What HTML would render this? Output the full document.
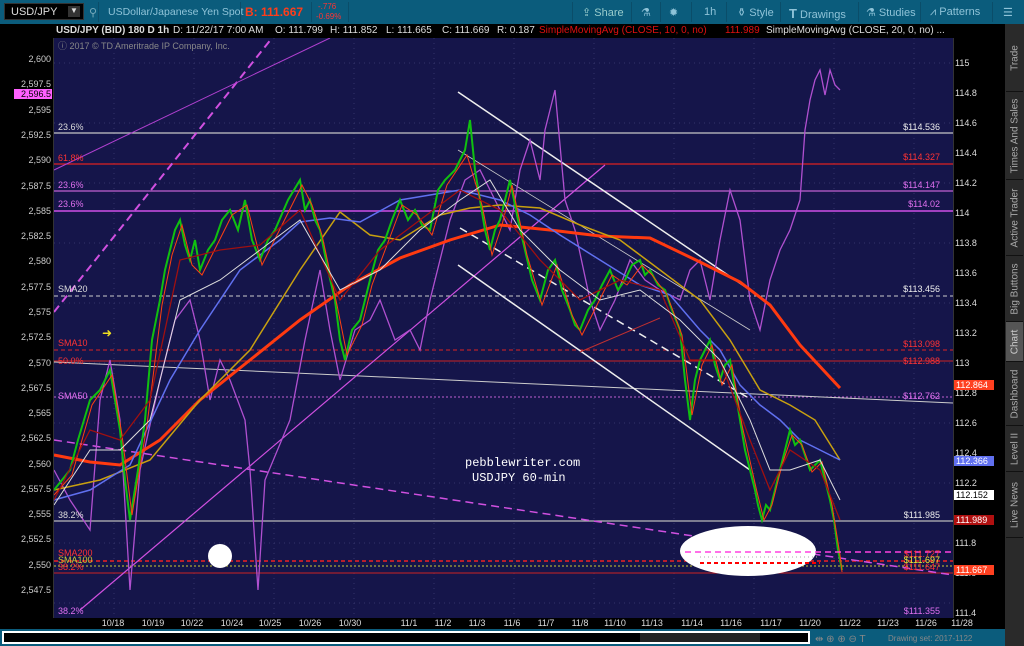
<!DOCTYPE html>
<html><head><meta charset="utf-8"><style>
*{margin:0;padding:0;box-sizing:border-box}
body{width:1024px;height:646px;overflow:hidden;background:#000;font-family:"Liberation Sans",sans-serif;position:relative}
.tb{position:absolute;left:0;top:0;width:1024px;height:24px;background:#0b5c7c;color:#8fc3d8;font-size:11px}
.tb span{position:absolute;top:6px}
.sep{position:absolute;top:2px;width:1px;height:20px;background:#0a4d69}
.info{position:absolute;top:24px;left:54px;width:910px;height:14px;background:#000;color:#ddd;font-size:10px;white-space:nowrap}
.info span{position:absolute;top:1px}
.side{position:absolute;left:1005px;top:24px;width:19px;height:622px;background:#2a2a2a}
.tab{position:absolute;left:1px;width:17px;border-bottom:1px solid #111;color:#aaa;font-size:10px}
.tab div{position:absolute;left:50%;top:50%;transform:translate(-50%,-50%) rotate(-90deg);white-space:nowrap}
</style></head><body>
<div class="tb">
<div style="position:absolute;left:4px;top:3px;width:80px;height:17px;background:#000;border:1px solid #333;color:#ddd;font-size:11px;padding:2px 6px">USD/JPY<span style="position:absolute;right:3px;top:2px;width:12px;height:11px;background:#333;color:#ddd;font-size:8px;text-align:center">▼</span></div>
<span style="left:89px;color:#7ab">⚲</span>
<div class="sep" style="left:98px"></div>
<span style="left:108px;font-size:10.5px">USDollar/Japanese Yen Spot</span>
<div class="sep" style="left:240px"></div>
<span style="left:245px;color:#ff3d1a;font-weight:bold;font-size:12px;top:5px">B: 111.667</span>
<div class="sep" style="left:311px"></div>
<span style="left:318px;top:2px;font-size:8px;color:#f33">-.776</span><span style="left:316px;top:12px;font-size:8px;color:#f33">-0.69%</span>
<div class="sep" style="left:348px"></div>
<div class="sep" style="left:572px"></div>
<span style="left:582px;color:#9cc">⇪ Share</span><div class="sep" style="left:631px"></div>
<span style="left:641px">⚗</span><div class="sep" style="left:660px"></div>
<span style="left:669px">✹</span><div class="sep" style="left:691px"></div>
<span style="left:704px">1h</span><div class="sep" style="left:726px"></div>
<span style="left:737px">⚱ Style</span><div class="sep" style="left:780px"></div>
<span style="left:789px"><b style="font-size:13px">T</b> Drawings</span><div class="sep" style="left:858px"></div>
<span style="left:866px">⚗ Studies</span><div class="sep" style="left:920px"></div>
<span style="left:930px">⩘ Patterns</span><div class="sep" style="left:992px"></div>
<span style="left:1003px">☰</span>
</div>
<div class="info">
<span style="left:2px;font-weight:bold">USD/JPY (BID) 180 D 1h</span>
<span style="left:119px">D: 11/22/17 7:00 AM</span>
<span style="left:221px">O: 111.799</span>
<span style="left:276px">H: 111.852</span>
<span style="left:332px">L: 111.665</span>
<span style="left:388px">C: 111.669</span>
<span style="left:443px">R: 0.187</span>
<span style="left:485px;color:#e01010">SimpleMovingAvg (CLOSE, 10, 0, no)</span>
<span style="left:671px;color:#e01010">111.989</span>
<span style="left:712px">SimpleMovingAvg (CLOSE, 20, 0, no) ...</span>
</div>
<svg style="position:absolute;left:0;top:38px" width="1005" height="608" viewBox="0 38 1005 608" font-family="Liberation Sans" font-size="9">
<rect x="54" y="38" width="899" height="580" fill="#15154a"/>
<g stroke="#34346a" stroke-dasharray="1 4" stroke-width="1">
<path d="M54 63H953M54 123H953M54 183H953M54 243H953M54 303H953M54 363H953M54 423H953M54 483H953M54 543H953M54 603H953"/>
<path d="M114 38V618M194 38V618M274 38V618M354 38V618M434 38V618M514 38V618M594 38V618M674 38V618M754 38V618M834 38V618M914 38V618"/>
</g>
<text x="58" y="49" fill="#888" font-size="9">ⓘ 2017 © TD Ameritrade IP Company, Inc.</text>
<path d="M54 133H953" stroke="#c8c8c8" stroke-width="1.2"/>
<path d="M54 164H953" stroke="#d22" stroke-width="1.2"/>
<path d="M54 191H953" stroke="#c060d0" stroke-width="1.2"/>
<path d="M54 211H953" stroke="#a040c0" stroke-width="2"/>
<path d="M54 296H953" stroke="#ccc" stroke-dasharray="4 3"/>
<path d="M54 350H953" stroke="#d22" stroke-dasharray="4 3"/>
<path d="M54 361H953" stroke="#c22" stroke-width="1"/>
<path d="M54 397H953" stroke="#c060d0" stroke-dasharray="2 2"/>
<path d="M54 362L953 403" stroke="#ccc" stroke-width="1"/>
<path d="M54 521H953" stroke="#bbb" stroke-width="1.2"/>
<path d="M54 561H953" stroke="#e22" stroke-dasharray="4 3" stroke-width="1.5"/>
<path d="M54 566H953" stroke="#cc3" stroke-dasharray="2 2"/>
<path d="M54 573H953" stroke="#c22" stroke-width="1"/>
<path d="M54 312L272 38" stroke="#d050e0" stroke-width="2" stroke-dasharray="8 5"/>
<path d="M54 170L330 38" stroke="#b040d0" stroke-width="1"/>
<path d="M80 610L605 165" stroke="#d050e0" stroke-width="1.2"/>
<path d="M54 440L953 575" stroke="#d050e0" stroke-width="1.5" stroke-dasharray="8 5"/>
<path d="M458 92L750 290M458 265L750 470" stroke="#eee" stroke-width="1.5"/>
<path d="M458 150L750 330" stroke="#ccc" stroke-width="0.8"/>
<path d="M460 228L752 400" stroke="#eee" stroke-width="1.5" stroke-dasharray="8 5"/>
<path d="M580 352L660 318" stroke="#c03030" stroke-width="1"/>
<polyline fill="none" stroke="#b050d0" stroke-width="1.3" points="54,470 70,500 90,530 100,400 110,360 120,420 130,590 140,470 160,380 175,320 190,300 200,340 210,400 220,360 230,380 245,420 250,470 258,590 265,480 290,420 305,340 320,270 330,330 340,380 355,330 370,320 380,300 395,340 410,330 420,350 430,300 450,220 465,180 480,170 495,200 510,230 520,170 530,140 540,180 545,130 550,110 555,90 565,200 575,230 590,300 600,330 615,300 630,260 645,280 660,290 680,300 690,270 700,260 710,300 720,240 730,190 740,220 750,300 760,330 770,280 780,250 790,230 800,200 805,130 810,100 815,80 820,70 825,95 830,70 835,85 840,90"/>
<polyline fill="none" stroke="#ff3a10" stroke-width="3" points="54,455 90,462 120,465 160,440 200,400 250,360 300,320 350,285 400,258 450,240 500,225 550,230 600,236 650,238 700,262 740,282 770,305 800,345 840,388"/>
<polyline fill="none" stroke="#c8a010" stroke-width="1.5" points="54,490 100,480 150,460 200,400 250,350 300,270 340,212 370,235 400,240 440,215 470,208 500,205 540,208 580,225 620,240 660,270 700,300 730,340 760,390 790,405 815,420 840,460"/>
<polyline fill="none" stroke="#6070f0" stroke-width="1.5" points="54,500 90,490 130,465 170,380 200,330 240,270 280,240 300,222 330,218 360,222 400,200 430,195 460,190 500,200 530,215 560,235 600,260 640,285 670,295 700,330 720,350 740,385 760,405 780,420 800,440 820,450 840,460"/>
<polyline fill="none" stroke="#10c010" stroke-width="2" points="54,490 62,480 70,470 78,440 90,400 100,390 110,370 115,400 120,430 125,480 130,520 138,470 145,420 152,340 160,300 165,270 170,250 175,230 180,220 185,245 190,260 195,240 200,270 208,250 215,240 222,220 230,210 238,230 245,200 252,240 260,260 268,240 275,230 288,200 300,180 305,210 310,200 315,220 320,230 328,270 335,300 340,340 345,360 352,330 360,320 365,300 370,280 378,250 385,240 392,220 400,200 408,220 415,210 422,225 430,230 438,190 445,180 455,170 465,150 470,120 475,170 480,200 485,230 490,250 495,230 500,220 505,200 510,180 518,220 525,250 532,280 540,300 548,270 555,260 562,290 570,310 575,325 580,330 588,310 595,300 602,285 610,270 618,290 625,280 632,265 640,260 645,275 650,270 658,285 665,290 672,310 680,330 685,380 690,420 695,380 700,360 705,350 710,340 715,365 720,380 725,365 730,360 735,390 740,420 745,450 750,470 755,490 758,505 762,520 766,505 770,510 775,490 780,470 785,450 790,430 795,445 800,440 805,455 810,470 815,465 820,460 825,480 830,500 834,520 838,550 842,570"/>
<polyline fill="none" stroke="#ff4010" stroke-width="1" points="54,495 72,475 92,405 112,375 122,435 132,515 147,425 162,305 172,255 182,225 192,265 202,275 217,245 232,215 247,205 262,265 277,235 302,185 312,205 322,235 337,305 347,355 362,325 372,285 387,245 402,205 417,215 432,235 447,185 467,155 482,205 492,255 502,225 512,185 527,255 542,305 557,265 572,315 582,335 597,305 612,275 627,285 642,265 652,275 667,295 682,335 692,415 702,365 712,345 722,385 732,365 742,425 752,470 757,492 764,520 772,505 782,465 792,435 802,445 812,472 822,462 832,505 840,555 842,572"/>
<polyline fill="none" stroke="#a01010" stroke-width="1.3" points="54,500 90,430 120,440 150,400 180,260 220,250 260,245 300,210 340,300 380,250 420,220 460,190 500,210 540,260 580,300 620,280 660,290 690,360 720,360 750,440 770,490 790,450 820,470 840,520"/>
<polyline fill="none" stroke="#ddd" stroke-width="1" points="54,505 90,450 120,450 150,420 180,300 220,280 260,250 300,220 340,290 380,270 420,230 460,200 490,180 520,230 560,270 600,300 640,290 680,320 720,360 750,420 770,470 790,470 820,460 840,500"/>
<ellipse cx="748" cy="551" rx="68" ry="25" fill="#fff"/>
<circle cx="220" cy="556" r="12" fill="#fff"/>
<path d="M685 552H953" stroke="#ff40e0" stroke-width="1.5" stroke-dasharray="6 4"/>
<path d="M700 563H820" stroke="#f00" stroke-width="2" stroke-dasharray="4 3"/>
<path d="M700 557H820" stroke="#aaa" stroke-width="1" stroke-dasharray="1 3"/>
<text x="465" y="466" fill="#fff" font-family="Liberation Mono" font-size="12">pebblewriter.com</text>
<text x="472" y="481" fill="#fff" font-family="Liberation Mono" font-size="12">USDJPY 60-min</text>
<text x="102" y="337" fill="#f0e020" font-size="12">➜</text>
<g font-size="9">
<text x="58" y="130" fill="#ddd">23.6%</text>
<text x="58" y="161" fill="#f33">61.8%</text>
<text x="58" y="188" fill="#e070f0">23.6%</text>
<text x="58" y="207" fill="#e070f0">23.6%</text>
<text x="58" y="292" fill="#ddd">SMA20</text>
<text x="58" y="346" fill="#f33">SMA10</text>
<text x="58" y="364" fill="#f33">50.0%</text>
<text x="58" y="399" fill="#e070f0">SMA50</text>
<text x="58" y="518" fill="#ddd">38.2%</text>
<text x="58" y="556" fill="#f33">SMA200</text>
<text x="58" y="563" fill="#cc3">SMA100</text>
<text x="58" y="570" fill="#f33">38.2%</text>
<text x="58" y="614" fill="#e070f0">38.2%</text>
</g>
<g font-size="9" text-anchor="end">
<text x="940" y="130" fill="#eee">$114.536</text>
<text x="940" y="160" fill="#f33">$114.327</text>
<text x="940" y="188" fill="#e070f0">$114.147</text>
<text x="940" y="207" fill="#e070f0">$114.02</text>
<text x="940" y="292" fill="#eee">$113.456</text>
<text x="940" y="347" fill="#f33">$113.098</text>
<text x="940" y="364" fill="#f33">$112.988</text>
<text x="940" y="399" fill="#e070f0">$112.762</text>
<text x="940" y="518" fill="#eee">$111.985</text>
<text x="940" y="557" fill="#f33">$111.727</text>
<text x="940" y="563" fill="#ee3">$111.697</text>
<text x="940" y="570" fill="#f33">$111.647</text>
<text x="940" y="614" fill="#e070f0">$111.355</text>
</g>
<path d="M53.5 38V618" stroke="#333"/>
<g fill="#ccc" font-size="9" text-anchor="end">
<text x="51" y="62">2,600</text><text x="51" y="87">2,597.5</text><text x="51" y="113">2,595</text><text x="51" y="138">2,592.5</text><text x="51" y="163">2,590</text><text x="51" y="189">2,587.5</text><text x="51" y="214">2,585</text><text x="51" y="239">2,582.5</text><text x="51" y="264">2,580</text><text x="51" y="290">2,577.5</text><text x="51" y="315">2,575</text><text x="51" y="340">2,572.5</text><text x="51" y="366">2,570</text><text x="51" y="391">2,567.5</text><text x="51" y="416">2,565</text><text x="51" y="441">2,562.5</text><text x="51" y="467">2,560</text><text x="51" y="492">2,557.5</text><text x="51" y="517">2,555</text><text x="51" y="542">2,552.5</text><text x="51" y="568">2,550</text><text x="51" y="593">2,547.5</text>
</g>
<rect x="14" y="89" width="38" height="10" fill="#ff60ff"/><text x="51" y="97" fill="#000" font-size="9" text-anchor="end">2,596.5</text>
<path d="M953.5 38V618" stroke="#333"/>
<g fill="#ddd" font-size="9">
<text x="955" y="66">115</text><text x="955" y="96">114.8</text><text x="955" y="126">114.6</text><text x="955" y="156">114.4</text><text x="955" y="186">114.2</text><text x="955" y="216">114</text><text x="955" y="246">113.8</text><text x="955" y="276">113.6</text><text x="955" y="306">113.4</text><text x="955" y="336">113.2</text><text x="955" y="366">113</text><text x="955" y="396">112.8</text><text x="955" y="426">112.6</text><text x="955" y="456">112.4</text><text x="955" y="486">112.2</text><text x="955" y="546">111.8</text><text x="955" y="576">111.6</text><text x="955" y="616">111.4</text>
</g>
<rect x="954" y="380" width="40" height="10" fill="#ff4020"/><text x="956" y="388" fill="#fff" font-size="9">112.864</text>
<rect x="954" y="456" width="40" height="10" fill="#6070f0"/><text x="956" y="464" fill="#fff" font-size="9">112.366</text>
<rect x="954" y="490" width="40" height="10" fill="#fff"/><text x="956" y="498" fill="#000" font-size="9">112.152</text>
<rect x="954" y="515" width="40" height="10" fill="#b01010"/><text x="956" y="523" fill="#fff" font-size="9">111.989</text>
<rect x="954" y="565" width="40" height="10" fill="#ff4020"/><text x="956" y="573" fill="#fff" font-size="9">111.667</text>
<text x="957" y="37" fill="#ccc" font-size="9">⤡</text>
<g fill="#ddd" font-size="9" text-anchor="middle">
<text x="113" y="626">10/18</text><text x="153" y="626">10/19</text><text x="192" y="626">10/22</text><text x="232" y="626">10/24</text><text x="270" y="626">10/25</text><text x="310" y="626">10/26</text><text x="350" y="626">10/30</text><text x="409" y="626">11/1</text><text x="443" y="626">11/2</text><text x="477" y="626">11/3</text><text x="512" y="626">11/6</text><text x="546" y="626">11/7</text><text x="580" y="626">11/8</text><text x="615" y="626">11/10</text><text x="652" y="626">11/13</text><text x="692" y="626">11/14</text><text x="731" y="626">11/16</text><text x="771" y="626">11/17</text><text x="810" y="626">11/20</text><text x="850" y="626">11/22</text><text x="888" y="626">11/23</text><text x="926" y="626">11/26</text><text x="962" y="626">11/28</text>
</g>
<rect x="0" y="629" width="1005" height="17" fill="#0b5c7c"/>
<rect x="2" y="631" width="808" height="13" fill="#fff"/>
<rect x="4" y="633" width="804" height="9" fill="#000"/>
<rect x="640" y="633" width="120" height="9" fill="#222"/>
<text x="815" y="642" fill="#888" font-size="10">⇹ ⊕ ⊕ ⊖ T</text>
<text x="888" y="641" fill="#888" font-size="8">Drawing set: 2017-1122</text>
</svg>
<div class="side">
<div class="tab" style="top:0;height:68px"><div>Trade</div></div>
<div class="tab" style="top:68px;height:88px"><div>Times And Sales</div></div>
<div class="tab" style="top:156px;height:76px"><div>Active Trader</div></div>
<div class="tab" style="top:232px;height:66px"><div>Big Buttons</div></div>
<div class="tab" style="top:298px;height:40px;background:#555;color:#ccc"><div>Chart</div></div>
<div class="tab" style="top:338px;height:64px"><div>Dashboard</div></div>
<div class="tab" style="top:402px;height:46px"><div>Level II</div></div>
<div class="tab" style="top:448px;height:66px"><div>Live News</div></div>
</div>
</body></html>
